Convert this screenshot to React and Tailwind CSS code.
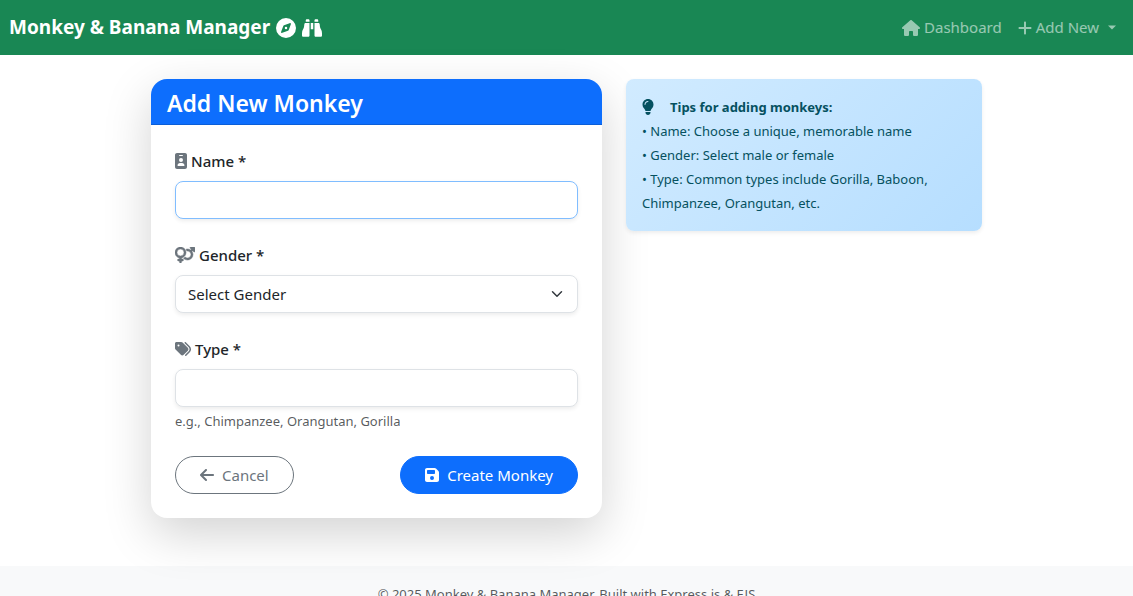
import {
  FaArrowLeft,
  FaBinoculars,
  FaCompass,
  FaFloppyDisk,
  FaHouse,
  FaIdBadge,
  FaLightbulb,
  FaPlus,
  FaTags,
} from "react-icons/fa6";

const control =
  "h-[38px] w-full rounded-lg border bg-white px-3 text-[15px] text-[#212529] shadow-[0_2px_4px_rgba(0,0,0,0.075)] outline-none";

function VenusMarsIcon() {
  return (
    <svg viewBox="0 0 640 512" className="h-4 w-5" fill="currentColor" aria-hidden="true">
      <path d="M176 288a112 112 0 1 0 0-224 112 112 0 1 0 0 224zM352 176c0 86.3-62.1 158.1-144 173.1V384h32c17.7 0 32 14.3 32 32s-14.3 32-32 32H208v32c0 17.7-14.3 32-32 32s-32-14.3-32-32V448H112c-17.7 0-32-14.3-32-32s14.3-32 32-32h32V349.1C62.1 334.1 0 262.3 0 176C0 78.8 78.8 0 176 0s176 78.8 176 176zM271.9 360.6c19.3-10.1 36.9-23.1 52.1-38.4c20 18.5 46.7 29.8 76.1 29.8c61.9 0 112-50.1 112-112s-50.1-112-112-112c-7.2 0-14.3 .7-21.1 2c-4.9-21.5-13-41.7-24-60.2C369.3 66 384.4 64 400 64c37 0 71.4 11.4 99.8 31l20.6-20.6L487 41c-6.9-6.9-8.9-17.2-5.2-26.2S494.3 0 504 0H616c13.3 0 24 10.7 24 24V136c0 9.7-5.8 18.5-14.8 22.2s-19.3 1.7-26.2-5.2l-33.4-33.4L545 140.2c19.5 28.4 31 62.7 31 99.8c0 97.2-78.8 176-176 176c-50.5 0-96-21.3-128.1-55.4z" stroke="currentColor" strokeWidth="16" />
    </svg>
  );
}

function Field({ id, label, icon, children }) {
  return (
    <div className="mb-6">
      <label htmlFor={id} className="mb-2 flex h-6 items-center gap-1 text-[15px] font-medium">
        <span className="text-[#6c757d]">{icon}</span>
        {label} *
      </label>
      {children}
    </div>
  );
}

function Navbar() {
  return (
    <nav className="flex h-[55px] items-center justify-between bg-[#198754] pr-4 pl-[9px]">
      <a href="#" className="flex items-center gap-1.5 text-[19px] font-bold text-white">
        Monkey &amp; Banana Manager
        <FaCompass className="size-5" />
        <FaBinoculars className="size-5" />
      </a>
      <div className="flex items-center gap-4 text-[15px] text-white/55">
        <a href="#" className="flex items-center gap-1">
          <FaHouse className="h-4 w-[18px]" />
          Dashboard
        </a>
        <button type="button" className="flex items-center gap-1">
          <FaPlus className="h-4 w-[14px]" />
          Add New
          <svg viewBox="0 0 10 5" className="ml-1 h-[5px] w-[10px]" fill="currentColor" aria-hidden="true">
            <path d="M1 0.5h8L5 4.5z" />
          </svg>
        </button>
      </div>
    </nav>
  );
}

function MonkeyForm() {
  return (
    <section className="relative z-10 overflow-hidden rounded-2xl bg-white shadow-[0_16px_48px_rgba(0,0,0,0.175)]">
      <header className="border-b border-[#0b5ed7] bg-[#0d6efd] px-4 pt-2 pb-1">
        <h1 className="text-[23px] leading-[33px] font-semibold text-white">Add New Monkey</h1>
      </header>
      <form className="p-6" onSubmit={(e) => e.preventDefault()}>
        <Field id="name" label="Name" icon={<FaIdBadge className="h-4 w-3" />}>
          <input id="name" type="text" className={`${control} border-[#80bdff]`} />
        </Field>
        <Field id="gender" label="Gender" icon={<VenusMarsIcon />}>
          <div className="relative">
            <select id="gender" defaultValue="" className={`${control} appearance-none border-[#dee2e6]`}>
              <option value="">Select Gender</option>
              <option value="male">Male</option>
              <option value="female">Female</option>
            </select>
            <svg
              viewBox="0 0 16 16"
              className="pointer-events-none absolute top-[13px] right-[15px] size-3"
              fill="none"
              stroke="#343a40"
              strokeWidth="2"
              strokeLinecap="round"
              strokeLinejoin="round"
              aria-hidden="true"
            >
              <path d="m2 5 6 6 6-6" />
            </svg>
          </div>
        </Field>
        <Field id="type" label="Type" icon={<FaTags className="size-4" />}>
          <input id="type" type="text" aria-describedby="type-help" className={`${control} border-[#dee2e6]`} />
          <p id="type-help" className="mt-1 text-[13px] leading-[21px] text-[#212529]/75">
            e.g., Chimpanzee, Orangutan, Gorilla
          </p>
        </Field>
        <div className="flex justify-between text-[15px]">
          <button
            type="button"
            className="flex h-[38px] items-center gap-2 rounded-full border border-[#6c757d] px-6 text-[#6c757d]"
          >
            <FaArrowLeft className="h-4 w-[14px]" />
            Cancel
          </button>
          <button
            type="submit"
            className="flex h-[38px] items-center gap-2 rounded-full border border-[#0d6efd] bg-[#0d6efd] px-6 text-white"
          >
            <FaFloppyDisk className="h-4 w-[14px]" />
            Create Monkey
          </button>
        </div>
      </form>
    </section>
  );
}

function Tips() {
  return (
    <aside className="relative z-10 self-start rounded-lg bg-linear-135 from-[#d1ebff] to-[#b6deff] p-4 text-[13px] leading-6 text-[#055160] shadow-[0_2px_4px_rgba(0,0,0,0.075)]">
      <p className="flex items-center gap-4 font-bold">
        <FaLightbulb className="h-4 w-3" />
        Tips for adding monkeys:
      </p>
      <p>• Name: Choose a unique, memorable name</p>
      <p>• Gender: Select male or female</p>
      <p>• Type: Common types include Gorilla, Baboon, Chimpanzee, Orangutan, etc.</p>
    </aside>
  );
}

export default function App() {
  return (
    <div className="flex min-h-screen flex-col bg-white font-['Noto_Sans','Open_Sans',sans-serif] text-[#212529]">
      <Navbar />
      <main className="mx-auto grid w-full max-w-[831px] grid-cols-[451fr_356fr] gap-6 pt-6 pb-12">
        <MonkeyForm />
        <Tips />
      </main>
      <footer className="bg-[#f8f9fa] py-4 text-center text-[13px] leading-6 text-[#212529]/75">
        © 2025 Monkey &amp; Banana Manager. Built with Express.js &amp; EJS
      </footer>
    </div>
  );
}
